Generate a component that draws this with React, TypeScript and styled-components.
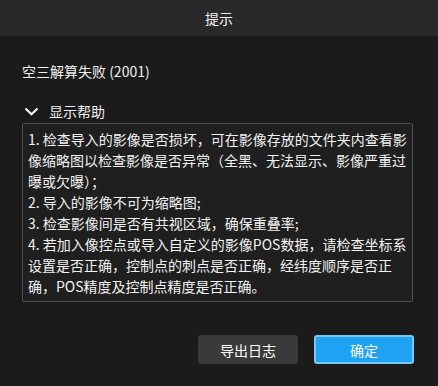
import React from "react";
import styled, { createGlobalStyle } from "styled-components";

const Global = createGlobalStyle`
  html, body { margin: 0; padding: 0; background: #1b1b1b; }
  body { font-family: "Noto Sans CJK SC", "Noto Sans", sans-serif; }
  * { box-sizing: border-box; }
`;

const Dialog = styled.div`
  width: 438px;
  height: 386px;
  background: #1b1b1b;
  display: flex;
  flex-direction: column;
  color: #f0f0f0;
`;

const Header = styled.div`
  height: 36px;
  background: #292929;
  display: flex;
  align-items: center;
  justify-content: center;
  font-size: 14px;
  color: #f2f2f2;
`;

const Body = styled.div`
  flex: 1;
  display: flex;
  flex-direction: column;
  padding: 0 25px 0 22px;
`;

const Message = styled.div`
  margin-top: 25px;
  font-size: 14px;
  line-height: 20px;
`;

const Toggle = styled.div`
  margin-top: 20px;
  display: flex;
  align-items: center;
  gap: 10px;
  padding-left: 2px;
  font-size: 14px;
  line-height: 20px;
  height: 20px;
`;

const HelpBox = styled.div`
  margin-top: 2px;
  border: 1px solid #4d4d4d;
  border-radius: 2px;
  background: #1f1f1f;
  padding: 5px 4px 4px 5px;
  font-size: 14px;
  line-height: 21px;
  color: #f2f2f2;
`;

const Line = styled.div``;

const Footer = styled.div`
  margin-top: 33px;
  display: flex;
  justify-content: flex-end;
  gap: 16px;
  margin-right: -1px;
`;

const Button = styled.button<{ $primary?: boolean }>`
  width: 100px;
  height: 29px;
  border-radius: 3px;
  font-family: "Noto Sans CJK SC", "Noto Sans", sans-serif;
  font-size: 14px;
  color: #ffffff;
  cursor: pointer;
  background: ${(p) => (p.$primary ? "#20a2f2" : "#3a3a3a")};
  border: ${(p) => (p.$primary ? "2px solid #76c9f6" : "1px solid #3a3a3a")};
  padding: 0;
`;

export default function App() {
  return (
    <>
      <Global />
      <Dialog>
        <Header>提示</Header>
        <Body>
          <Message>空三解算失败 (2001)</Message>
          <Toggle>
            <svg width="15" height="9" viewBox="0 0 15 9">
              <polyline points="1.5,1.5 7.5,7.2 13.5,1.5" fill="none" stroke="#f2f2f2" strokeWidth="2.2" />
            </svg>
            <span>显示帮助</span>
          </Toggle>
          <HelpBox>
            <Line>1. 检查导入的影像是否损坏，可在影像存放的文件夹内查看影像缩略图以检查影像是否异常（全黑、无法显示、影像严重过曝或欠曝）；</Line>
            <Line>2. 导入的影像不可为缩略图;</Line>
            <Line>3. 检查影像间是否有共视区域，确保重叠率;</Line>
            <Line>4. 若加入像控点或导入自定义的影像POS数据，请检查坐标系设置是否正确，控制点的刺点是否正确，经纬度顺序是否正确，POS精度及控制点精度是否正确。</Line>
          </HelpBox>
          <Footer>
            <Button>导出日志</Button>
            <Button $primary>确定</Button>
          </Footer>
        </Body>
      </Dialog>
    </>
  );
}
